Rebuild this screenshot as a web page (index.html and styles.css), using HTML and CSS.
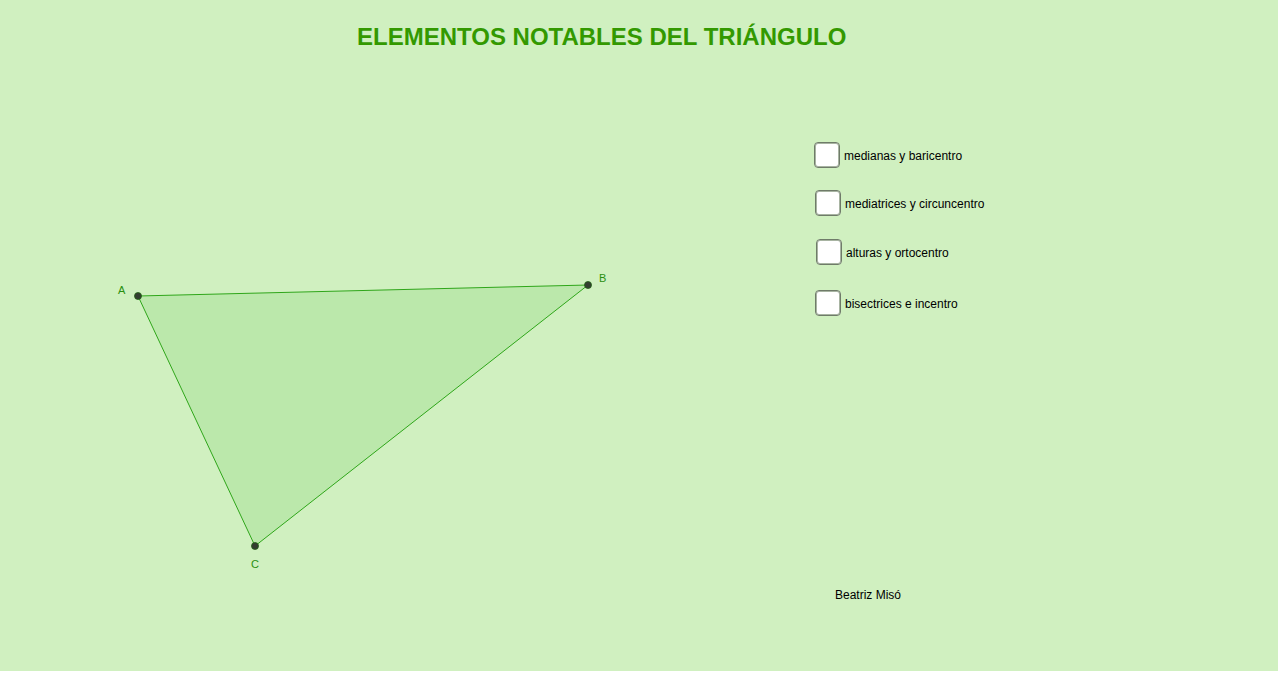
FILE: index.html
```html
<!DOCTYPE html>
<html lang="es">
<head>
<meta charset="utf-8">
<title>Elementos notables del triángulo</title>
<link rel="stylesheet" href="styles.css">
</head>
<body>
<div class="applet">
  <svg class="canvas" width="1278" height="671" viewBox="0 0 1278 671">
    <polygon points="138,296 588,285 255,546" fill="#bbe8ab" stroke="none"/>
    <line x1="138" y1="296" x2="588" y2="285" stroke="#2fa61a" stroke-width="1"/>
    <line x1="588" y1="285" x2="255" y2="546" stroke="#2fa61a" stroke-width="1"/>
    <line x1="255" y1="546" x2="138" y2="296" stroke="#2fa61a" stroke-width="1"/>
    <circle cx="138" cy="296" r="3.5" fill="#333d30" stroke="#1f5f14" stroke-width="0.8"/>
    <circle cx="588" cy="285" r="3.5" fill="#333d30" stroke="#1f5f14" stroke-width="0.8"/>
    <circle cx="255" cy="546" r="3.5" fill="#333d30" stroke="#1f5f14" stroke-width="0.8"/>
    <text x="118" y="294" class="pt">A</text>
    <text x="599" y="282" class="pt">B</text>
    <text x="251" y="568" class="pt">C</text>
  </svg>
  <h1 class="title">ELEMENTOS NOTABLES DEL TRIÁNGULO</h1>
  <label class="cb cb1"><span class="box"></span><span class="txt">medianas y baricentro</span></label>
  <label class="cb cb2"><span class="box"></span><span class="txt">mediatrices y circuncentro</span></label>
  <label class="cb cb3"><span class="box"></span><span class="txt">alturas y ortocentro</span></label>
  <label class="cb cb4"><span class="box"></span><span class="txt">bisectrices e incentro</span></label>
  <div class="author">Beatriz Misó</div>
</div>
</body>
</html>
```
FILE: styles.css
```css
html, body {
  margin: 0;
  padding: 0;
  background: #ffffff;
}
body {
  width: 1280px;
  height: 673px;
  overflow: hidden;
  font-family: "Liberation Sans", Arial, sans-serif;
}
.applet {
  position: relative;
  width: 1278px;
  height: 671px;
  background: #d0f0c0;
}
.canvas {
  position: absolute;
  left: 0;
  top: 0;
}
.pt {
  font-family: "Liberation Sans", Arial, sans-serif;
  font-size: 11px;
  fill: #2a8f10;
}
.title {
  position: absolute;
  left: 357px;
  top: 22px;
  margin: 0;
  font-size: 24px;
  line-height: 30px;
  font-weight: bold;
  color: #339900;
  white-space: nowrap;
}
.cb {
  position: absolute;
  display: flex;
  align-items: center;
  gap: 4px;
  font-size: 12px;
  color: #000;
}
.txt {
  padding-top: 1px;
}
.box {
  width: 24px;
  height: 24px;
  border: 1px solid #6f7b69;
  border-radius: 4px;
  background: #ffffff;
  box-shadow: inset 0 0 0 1px #a8b4a2;
}
.cb1 { left: 814px; top: 142px; }
.cb2 { left: 815px; top: 190px; }
.cb3 { left: 816px; top: 239px; }
.cb4 { left: 815px; top: 290px; }
.author {
  position: absolute;
  left: 835px;
  top: 588px;
  font-size: 12px;
  color: #000;
}
```
